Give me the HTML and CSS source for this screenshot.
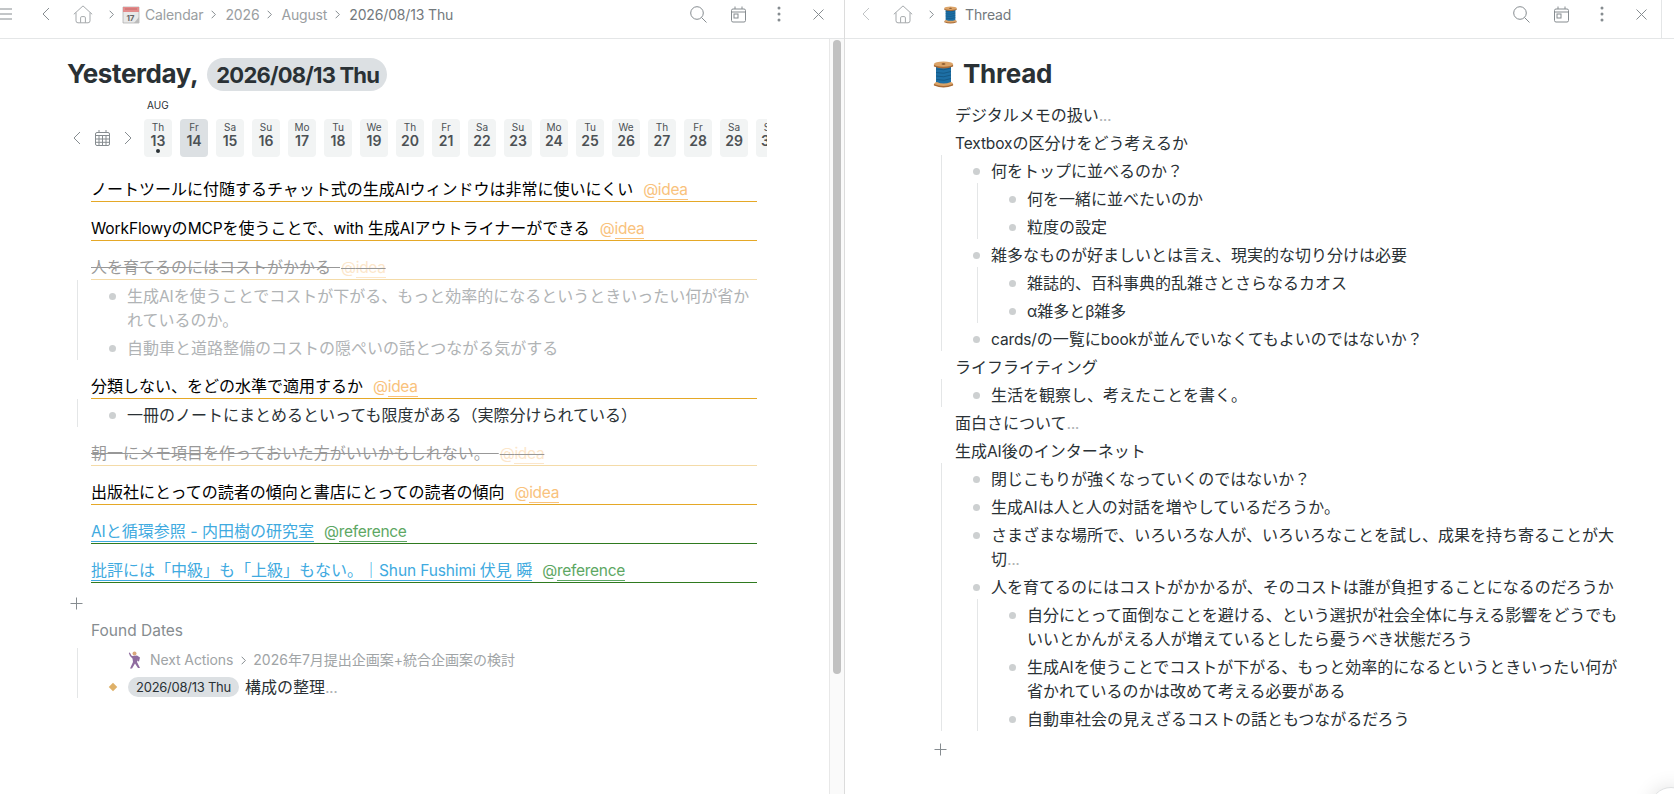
FILE: index.html
```html
<!DOCTYPE html>
<html lang="ja">
<head>
    <meta charset="UTF-8">
    <meta name="viewport" content="width=device-width, initial-scale=1.0">
    <title>2026/08/13 Thu</title>
    <link rel="stylesheet" href="styles.css">
</head>
<body>
    <!-- 共通アイコン -->
    <svg class="defs" width="0" height="0">
        <symbol id="left" viewBox="0 0 8 14"><path d="M7 1 1 7l6 6"/></symbol>
        <symbol id="right" viewBox="0 0 8 14"><path d="m1 1 6 6-6 6"/></symbol>
        <symbol id="home" viewBox="0 0 20 19"><path d="M.8 9.3 10 .9l9.2 8.4M3 7.5v8.300q0 2 2 2h10q2 0 2-2V7.500M7.600 17.800v-5q0-1.200 1.200-1.200h2.400q1.200 0 1.200 1.200v5"/></symbol>
        <symbol id="search" viewBox="0 0 17 17"><circle cx="7" cy="7" r="6.300"/><path d="m11.500 11.500 5 5"/></symbol>
        <symbol id="today" viewBox="0 0 15 17"><rect x=".5" y="3" width="14" height="13" rx="1.500"/><path d="M.5 6h14M4 .5V3M11 .5V3"/><rect x="3" y="8" width="4" height="4"/></symbol>
        <symbol id="dots" viewBox="0 0 4 16"><circle cx="2" cy="2" r="1.500"/><circle cx="2" cy="8" r="1.500"/><circle cx="2" cy="14" r="1.500"/></symbol>
        <symbol id="close" viewBox="0 0 11 11"><path d="m.5.5 10 10m0-10-10 10"/></symbol>
        <symbol id="plus" viewBox="0 0 13 13"><path d="M6.500.5v12M.5 6.500h12"/></symbol>
        <symbol id="spool" viewBox="0 0 20 27">
            <path d="M2.500 4h15v19h-15z" fill="#1d6fa5"/>
            <path d="M2.500 8q8 2 15-1M2.500 11.500q8 2 15-1M2.500 15q8 2 15-1M3 18.500q8 2 14.500-1" fill="none" stroke="#13547f" stroke-width=".8"/>
            <path d="M.4 3.500v2q9.600 4 19.200 0v-2zM.4 23v1.500q9.600 4 19.200 0V23z" fill="#a86a35"/>
            <ellipse cx="10" cy="3.200" rx="9.600" ry="2.600" fill="#dca468"/>
            <path d="M.4 23q1-2 3-2 6.500 3 14 0 2 .5 2.200 2-9.600 4-19.200 0" fill="#dca468"/>
            <ellipse cx="10" cy="3" rx="2" ry=".8" fill="#7a4a22"/>
        </symbol>
    </svg>

    <div class="app">
        <section class="pane pane-left">
            <header class="bar">
                <svg class="icon menu" viewBox="0 0 14 12"><path d="M0 1h14M0 6h14M0 11h14"/></svg>
                <svg class="icon back"><use href="#left"/></svg>
                <svg class="icon home"><use href="#home"/></svg>
                <nav class="crumbs">
                    <svg class="icon sep"><use href="#right"/></svg>
                    <svg class="cal-emoji" viewBox="0 0 18 18"><path d="M1 1h16v16H1z" fill="#e9e9e9" stroke="#aaa" stroke-width=".7"/><path d="M1 1h16v5H1z" fill="#e38c8c"/><path d="M3 3h12" stroke="#c86a6a"/><path d="m17 11-5 6h5z" fill="#bbb"/><text x="4.500" y="15" class="cal-num">17</text></svg>
                    <a class="c1">Calendar</a>
                    <svg class="icon sep"><use href="#right"/></svg>
                    <a class="c2">2026</a>
                    <svg class="icon sep"><use href="#right"/></svg>
                    <a class="c3">August</a>
                    <svg class="icon sep"><use href="#right"/></svg>
                    <a class="current">2026/08/13 Thu</a>
                </nav>
                <div class="tools">
                    <svg class="icon search"><use href="#search"/></svg>
                    <svg class="icon today"><use href="#today"/></svg>
                    <svg class="icon dots"><use href="#dots"/></svg>
                    <svg class="icon close"><use href="#close"/></svg>
                </div>
            </header>
            <div class="scroll">
                <main class="page">
                    <h1>Yesterday, <time>2026/08/13 Thu</time></h1>

                    <div class="calendar">
                        <div class="cal-nav">
                            <svg class="icon arrow"><use href="#left"/></svg>
                            <svg class="icon grid" viewBox="0 0 15 16"><rect x=".5" y="2.500" width="14" height="13" rx="1.500"/><path d="M.5 5.500h14M.5 9h14M.5 12.300h14M4 5.500v10M7.500 5.500v10M11 5.500v10M4 0v2.500M11 0v2.500"/></svg>
                            <svg class="icon arrow"><use href="#right"/></svg>
                        </div>
                        <div class="strip">
                            <div class="month">AUG</div>
                            <div class="days">
                                <div class="day has-note">Th<b>13</b></div>
                                <div class="day today-cell">Fr<b>14</b></div>
                                <div class="day">Sa<b>15</b></div>
                                <div class="day">Su<b>16</b></div>
                                <div class="day">Mo<b>17</b></div>
                                <div class="day">Tu<b>18</b></div>
                                <div class="day">We<b>19</b></div>
                                <div class="day">Th<b>20</b></div>
                                <div class="day">Fr<b>21</b></div>
                                <div class="day">Sa<b>22</b></div>
                                <div class="day">Su<b>23</b></div>
                                <div class="day">Mo<b>24</b></div>
                                <div class="day">Tu<b>25</b></div>
                                <div class="day">We<b>26</b></div>
                                <div class="day">Th<b>27</b></div>
                                <div class="day">Fr<b>28</b></div>
                                <div class="day">Sa<b>29</b></div>
                                <div class="day">Su<b>30</b></div>
                            </div>
                        </div>
                    </div>

                    <div class="outline">
                        <div class="card">ノートツールに付随するチャット式の生成<i>AI</i>ウィンドウは非常に使いにくい<span class="tag">@<u>idea</u></span></div>
                        <div class="card"><i>WorkFlowy</i>の<i>MCP</i>を使うことで、<i>with </i>生成<i>AI</i>アウトライナーができる<span class="tag">@<u>idea</u></span></div>
                        <div class="card done"><s>人を育てるのにはコストがかかる&nbsp;&nbsp;<span class="tag">@<u>idea</u></span></s></div>
                        <ul class="children faded">
                            <li>生成<i>AI</i>を使うことでコストが下がる、もっと効率的になるというときいったい何が省かれているのか。</li>
                            <li>自動車と道路整備のコストの隠ぺいの話とつながる気がする</li>
                        </ul>
                        <div class="card">分類しない、をどの水準で適用するか<span class="tag">@<u>idea</u></span></div>
                        <ul class="children">
                            <li>一冊のノートにまとめるといっても限度がある（実際分けられている）</li>
                        </ul>
                        <div class="card done"><s>朝一にメモ項目を作っておいた方がいいかもしれない。&nbsp;&nbsp;<span class="tag">@<u>idea</u></span></s></div>
                        <div class="card">出版社にとっての読者の傾向と書店にとっての読者の傾向<span class="tag">@<u>idea</u></span></div>
                        <div class="card ref"><a><i>AI</i>と循環参照 - 内田樹の研究室</a><span class="tag">@<u>reference</u></span></div>
                        <div class="card ref"><a>批評には「中級」も「上級」もない。｜<i>Shun Fushimi </i>伏見 瞬</a><span class="tag">@<u>reference</u></span></div>
                    </div>
                    <svg class="icon plus"><use href="#plus"/></svg>

                    <h2>Found Dates</h2>
                    <div class="found">
                        <div class="path">
                            <svg class="dancer" viewBox="0 0 14 18"><circle cx="6.500" cy="2.500" r="2" fill="#d9a77c"/><path d="m4 5 5-.5 3 2-1 4-1.500-.5.300-2L9 11l3 6h-2l-3-4.500L4 17.500H2L5 11 4.500 7.500 2 5 .8 2l1-.5 1.700 3z" fill="#8f6b9f"/></svg>
                            <span class="next">Next Actions</span>
                            <svg class="icon sep"><use href="#right"/></svg>
                            <span>2026年7月提出企画案+統合企画案の検討</span>
                        </div>
                        <div class="hit"><time>2026/08/13 Thu</time>構成の整理<em>...</em></div>
                    </div>
                </main>
                <div class="scrollbar"><div class="thumb"></div></div>
            </div>
        </section>

        <section class="pane pane-right">
            <header class="bar">
                <svg class="icon back off"><use href="#left"/></svg>
                <svg class="icon home"><use href="#home"/></svg>
                <nav class="crumbs">
                    <svg class="icon sep"><use href="#right"/></svg>
                    <svg class="spool-small"><use href="#spool"/></svg>
                    <a class="current">Thread</a>
                </nav>
                <div class="tools">
                    <svg class="icon search"><use href="#search"/></svg>
                    <svg class="icon today"><use href="#today"/></svg>
                    <svg class="icon dots"><use href="#dots"/></svg>
                    <svg class="icon close"><use href="#close"/></svg>
                </div>
            </header>
            <main class="page">
                <h1><svg class="spool"><use href="#spool"/></svg>Thread</h1>
                <div class="outline">
                    <p>デジタルメモの扱い<em>...</em></p>
                    <p><i>Textbox</i>の区分けをどう考えるか</p>
                    <ul class="children">
                        <li>何をトップに並べるのか？
                            <ul class="children">
                                <li>何を一緒に並べたいのか</li>
                                <li>粒度の設定</li>
                            </ul>
                        </li>
                        <li>雑多なものが好ましいとは言え、現実的な切り分けは必要
                            <ul class="children">
                                <li>雑誌的、百科事典的乱雑さとさらなるカオス</li>
                                <li><i>α</i>雑多と<i>β</i>雑多</li>
                            </ul>
                        </li>
                        <li><i>cards/</i>の一覧に<i>book</i>が並んでいなくてもよいのではないか？</li>
                    </ul>
                    <p>ライフライティング</p>
                    <ul class="children">
                        <li>生活を観察し、考えたことを書く。</li>
                    </ul>
                    <p>面白さについて<em>...</em></p>
                    <p>生成<i>AI</i>後のインターネット</p>
                    <ul class="children">
                        <li>閉じこもりが強くなっていくのではないか？</li>
                        <li>生成<i>AI</i>は人と人の対話を増やしているだろうか。</li>
                        <li>さまざまな場所で、いろいろな人が、いろいろなことを試し、成果を持ち寄ることが大切<em>...</em></li>
                        <li>人を育てるのにはコストがかかるが、そのコストは誰が負担することになるのだろうか
                            <ul class="children">
                                <li>自分にとって面倒なことを避ける、という選択が社会全体に与える影響をどうでもいいとかんがえる人が増えているとしたら憂うべき状態だろう</li>
                                <li>生成<i>AI</i>を使うことでコストが下がる、もっと効率的になるというときいったい何が省かれているのかは改めて考える必要がある</li>
                                <li>自動車社会の見えざるコストの話ともつながるだろう</li>
                            </ul>
                        </li>
                    </ul>
                </div>
                <svg class="icon plus"><use href="#plus"/></svg>
            </main>
        </section>
    </div>
    <div class="help"></div>
</body>
</html>
```

FILE: styles.css
```css
* {
    box-sizing: border-box;
}
body {
    margin: 0;
    font-family: Inter, "Noto Sans CJK JP", sans-serif;
    font-size: 16px;
    line-height: 24px;
    color: #2a3135;
    background: #fff;
    text-spacing-trim: space-all;
    overflow: hidden;
}
.defs {
    display: none;
}
.app {
    display: flex;
    height: 794px;
}
.pane {
    display: flex;
    flex-direction: column;
}
.pane-left {
    width: 845px;
    border-right: 1px solid #dcdcdc;
}
.pane-right {
    flex: 1;
}

/* 欧文は少し詰める */
i {
    font-style: normal;
    font-size: 15.5px;
    line-height: 1;
    letter-spacing: -0.12px;
}
em {
    font-style: normal;
    letter-spacing: -0.5px;
    color: #b0b3b5;
}

/* アイコン */
.icon {
    display: block;
    flex: none;
    fill: none;
    stroke: #868c90;
    stroke-width: 1;
    overflow: visible;
}
.menu { width: 14px; height: 12px; }
.back { width: 8px; height: 14px; }
.off { stroke: #c0c3c5; }
.home { width: 20px; height: 19px; stroke: #a5a9ac; }
.sep { width: 5px; height: 9px; stroke-width: 1.6; }
.search { width: 17px; height: 17px; }
.today { width: 15px; height: 17px; }
.dots { width: 4px; height: 16px; fill: #868c90; stroke: none; }
.close { width: 11px; height: 11px; }
.plus { width: 13px; height: 13px; }

/* ヘッダー */
.bar {
    display: flex;
    align-items: center;
    height: 39px;
    padding-bottom: 10px;
    border-bottom: 1px solid #e4e6e7;
    font-size: 14px;
    letter-spacing: -0.15px;
    color: #9a9ea1;
}
.pane-left .menu { margin-left: -2px; }
.pane-left .back { margin-left: 30px; }
.bar .home { margin-left: 23px; }
.pane-right .back { margin-left: 17px; }
.crumbs {
    display: flex;
    align-items: center;
    padding-top: 1px;
}
.crumbs .sep { margin-left: 16px; }
.crumbs a + .sep { margin-left: 8px; }
.crumbs a { margin-left: 9px; }
.crumbs .c1 { margin-left: 5px; }
.crumbs .current { color: #73797d; }
.cal-emoji {
    width: 18px;
    height: 18px;
    margin-left: 8px;
}
.cal-num {
    font-size: 8px;
    font-weight: 700;
    fill: #666;
}
.spool-small {
    width: 13px;
    height: 18px;
    margin-left: 10px;
}
.pane-right .crumbs .current { margin-left: 8px; }
.tools {
    display: flex;
    align-items: center;
    margin-left: auto;
    padding-right: 20px;
}
.tools .today { margin-left: 24px; }
.tools .dots { margin-left: 31px; }
.tools .close { margin-left: 32px; }
.pane-right .bar .tools {
    height: 39px;
    margin-bottom: -10px;
    padding-right: 14px;
    padding-bottom: 10px;
    margin-right: 12px;
    border-right: 1px solid #e4e6e7;
}

/* 本文 */
.scroll {
    display: flex;
    flex: 1;
}
.page {
    flex: 1;
    padding: 18px 0 0 67px;
}
.pane-right .page {
    padding-left: 88px;
}
h1 {
    display: flex;
    align-items: center;
    height: 34px;
    margin: 0;
    font-size: 26px;
    letter-spacing: -0.4px;
}
h1 time {
    height: 33px;
    margin-left: 9px;
    padding: 0 8px 0 9px;
    border-radius: 17px;
    font-size: 22px;
    line-height: 34px;
    letter-spacing: -0.8px;
    background: #dce0e3;
}
.spool {
    width: 21px;
    height: 27px;
    margin-right: 9px;
}
.pane-right h1 {
    letter-spacing: -0.25px;
}

/* カレンダー */
.calendar {
    display: flex;
    width: 700px;
    height: 66px;
}
.cal-nav {
    display: flex;
    align-items: center;
    gap: 14px;
    width: 77px;
    padding: 28px 0 0 6px;
}
.arrow { width: 8px; height: 14px; }
.grid { width: 15px; height: 16px; }
.strip {
    flex: 1;
    overflow: hidden;
}
.month {
    padding: 8px 0 0 3px;
    font-size: 10px;
    line-height: 12px;
    height: 28px;
}
.days {
    display: flex;
    gap: 8px;
}
.day {
    position: relative;
    flex: none;
    width: 28px;
    height: 38px;
    padding-top: 2px;
    border-radius: 4px;
    background: #f2f4f4;
    color: #4c5154;
    font-size: 10px;
    line-height: 12px;
    text-align: center;
}
.day b {
    display: block;
    font-size: 14px;
    font-weight: 600;
    line-height: 16px;
}
.today-cell {
    background: #dce0e3;
}
.has-note::after {
    content: "";
    display: block;
    width: 4px;
    height: 4px;
    margin: 0 auto;
    border-radius: 50%;
    background: #2a3135;
}

/* アウトライン */
.outline {
    display: flex;
    flex-direction: column;
}
.pane-left .outline {
    width: 666px;
    margin-left: 24px;
    padding-top: 8px;
}
.pane-right .outline {
    width: 670px;
    margin-left: 22px;
    padding-top: 10px;
}
.card {
    height: 25px;
    margin: 12px 0 2px;
    border-bottom: 1px solid #e5a827;
    color: #000;
}
.tag {
    margin-left: 10px;
    font-size: 15.5px;
    line-height: 1;
    letter-spacing: -0.3px;
    color: #f9c27c;
}
.done .tag {
    margin-left: 1px;
}
.tag u {
    text-decoration: none;
    border-bottom: 1px solid;
}
.card.ref {
    border-color: #2f7a1f;
}
.ref .tag {
    color: #5da763;
}
.card a {
    color: #40aae0;
    border-bottom: 1px solid;
}
.done {
    opacity: 0.4;
}
.faded {
    color: #b0b3b5;
}
p {
    margin: 0;
    padding: 2px 0;
}
.children {
    margin: 0;
    padding: 0;
    list-style: none;
    position: relative;
}
.children::before {
    content: "";
    position: absolute;
    left: -14px;
    top: -2px;
    bottom: 2px;
    width: 1px;
    background: #e4e6e7;
}
.children li {
    position: relative;
    padding: 2px 0 2px 36px;
}
.children li::before {
    content: "";
    position: absolute;
    left: 18px;
    top: 11px;
    width: 7px;
    height: 7px;
    border-radius: 50%;
    background: #cdd0d1;
}
.children li .children {
    margin: 2px 0 -2px;
}
.page > .plus {
    margin: 12px 0 0 3px;
}
.pane-right .page > .plus {
    margin: 10px 0 0 1px;
}

/* 日付の検索結果 */
h2 {
    margin: 9px 0 0 24px;
    font-size: 15.5px;
    font-weight: 400;
    color: #868c90;
}
.found {
    margin: 5px 0 0 10px;
    border-left: 1px solid #e4e6e7;
    height: 50px;
}
.path {
    display: flex;
    align-items: center;
    padding-left: 50px;
    font-size: 14px;
    color: #a0a4a6;
}
.dancer {
    width: 14px;
    height: 18px;
    margin-right: 8px;
}
.next { letter-spacing: -0.1px; }
.path .sep { margin: 0 7px 0 8px; }
.hit {
    display: flex;
    align-items: center;
    margin-top: 3px;
    padding-left: 32px;
}
.hit::before {
    content: "";
    width: 6px;
    height: 6px;
    margin-right: 12px;
    transform: rotate(45deg);
    background: #deb068;
}
.hit time {
    height: 20px;
    margin-right: 6px;
    padding: 0 8px;
    border-radius: 10px;
    font-size: 13px;
    line-height: 20px;
    letter-spacing: -0.25px;
    background: #dce0e3;
}

/* スクロールバー */
.scrollbar {
    width: 15px;
    padding: 1px 0 0 3px;
    border-left: 1px solid #e8e8e8;
    background: #fafafa;
}
.thumb {
    width: 8px;
    height: 634px;
    border-radius: 4px;
    background: #c1c1c1;
}

/* 右下の丸ボタン */
.help {
    position: fixed;
    left: 1650px;
    top: 787px;
    width: 42px;
    height: 42px;
    border-radius: 50%;
    background: #fff;
    border: 1px solid #dfe1e2;
    box-shadow: 0 0 20px rgba(0, 0, 0, 0.12);
}
```
